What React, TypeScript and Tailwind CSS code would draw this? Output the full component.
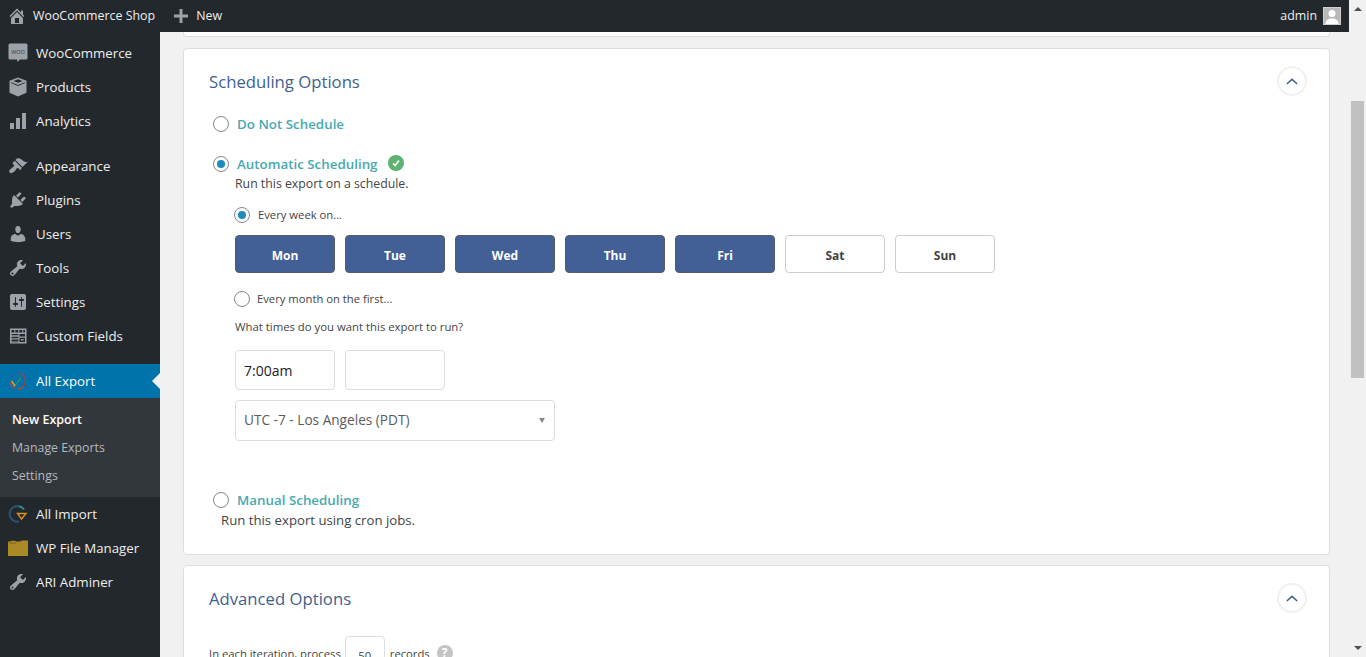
import React from "react";

const font = { fontFamily: '"Open Sans", sans-serif' };

function Dash({ d, className = "" }: { d: string; className?: string }) {
  return (
    <svg viewBox="0 0 20 20" className={"w-5 h-5 fill-[#9ca2a7] " + className}>
      <path d={d} />
    </svg>
  );
}

const P = {
  home: "M16 8.5l1.53 1.53-1.06 1.06L10 4.62l-6.47 6.47-1.06-1.06L10 2.5l4 4v-2h2v4zm-6-2.46l6 5.99V18H4v-5.97zM12 17v-5H8v5h4z",
  plus: "M17 8.5v3h-5.5V17h-3v-5.5H3v-3h5.5V3h3v5.5H17z",
  box: "M10 .5l8.500 3.300V15.700L10 19.500 1.500 15.700V3.800L10 .5zm0 1.700L5.500 4 10 5.800 14.500 4 10 2.200zM3 5.200v.9l7 3 7-3v-.9l-7 2.900-7-2.900z",
  bars: "M18 18V2h-4v16h4zm-6 0V7H8v11h4zm-6 0v-6H2v6h4z",
  brush: "M14.48 11.06L7.41 3.99l1.5-1.5c.5-.56 2.3-.47 3.51.32 1.21.8 1.43 1.28 2.91 2.1 1.18.64 2.45 1.26 4.45.85zm-.71.71L6.7 4.7 4.93 6.47c-.39.39-.39 1.02 0 1.41l1.06 1.06c.39.39.39 1.03 0 1.42-.6.6-1.43 1.11-2.21 1.69-.35.26-.7.53-1.01.84C1.43 13.23.78 15.57 1.7 16.5l.15.15c.93.92 3.27.27 4.61-1.07.31-.31.58-.66.84-1.01.58-.78 1.09-1.61 1.69-2.21.39-.39 1.03-.39 1.42 0l1.06 1.06c.39.39 1.02.39 1.41 0z",
  plugin: "M13.11 4.36L9.87 7.6 8 5.73l3.24-3.24c.35-.34 1.05-.2 1.56.32.52.51.66 1.21.31 1.55zm-8 1.77l.91-1.12 9.01 9.01-1.19.84c-.71.71-2.63 1.16-3.82 1.16H6.14L4.9 17.26c-.59.59-1.54.59-2.12 0-.59-.58-.59-1.53 0-2.12l1.24-1.24v-3.88c0-1.13.4-3.19 1.09-3.89zm7.26 3.97l3.24-3.24c.34-.35 1.04-.21 1.55.31.52.51.66 1.21.31 1.55l-3.24 3.25z",
  users: "M10 9.25c-2.27 0-2.73-3.44-2.73-3.44C7 4.02 7.82 2 9.97 2c2.16 0 2.98 2.02 2.71 3.81 0 0-.41 3.44-2.68 3.44zm0 2.57L12.72 10c2.39 0 4.52 2.33 4.52 4.53v2.49s-3.65 1.13-7.24 1.13c-3.65 0-7.24-1.13-7.24-1.13v-2.49c0-2.25 1.94-4.48 4.47-4.48z",
  tools: "M16.68 9.77c-1.34 1.34-3.3 1.67-4.95.99l-5.41 6.52c-.99.99-2.59.99-3.58 0s-.99-2.59 0-3.57l6.52-5.42c-.68-1.65-.35-3.61.99-4.95 1.28-1.28 3.12-1.62 4.72-1.06l-2.89 2.89 2.82 2.82 2.86-2.87c.53 1.58.18 3.39-1.08 4.65zM3.81 16.21c.4.39 1.04.39 1.43 0 .4-.4.4-1.04 0-1.43-.39-.4-1.03-.4-1.43 0-.39.39-.39 1.03 0 1.43z",
  settings: "M18 16V4c0-1.1-.9-2-2-2H4c-1.1 0-2 .9-2 2v12c0 1.1.9 2 2 2h12c1.1 0 2-.9 2-2zM8 11h1c.55 0 1 .45 1 1s-.45 1-1 1H8v1.5c0 .28-.22.5-.5.5s-.5-.22-.5-.5V13H6c-.55 0-1-.45-1-1s.45-1 1-1h1V5.5c0-.28.22-.5.5-.5s.5.22.5.5V11zm5-2h-1c-.55 0-1-.45-1-1s.45-1 1-1h1V5.5c0-.28.22-.5.5-.5s.5.22.5.5V7h1c.55 0 1 .45 1 1s-.45 1-1 1h-1v5.5c0 .28-.22.5-.5.5s-.5-.22-.5-.5V9z",
  fields: "M2 2.500h16.500v15H2v-15zM3.500 4v2.500h2.800V4H3.500zm3.800 0v2.500h3V4h-3zm4 0v2.500h3V4h-3zm4 0v2.500h1.700V4h-1.700zM3.500 8v1.300h7V8h-7zm8 0v2.500H17V8h-5.500zM3.500 10.800v1.400h7v-1.400h-7zm0 2.700v1.400h7v-1.400h-7zm8-1.800V16H17v-4.300h-5.500zM3.500 15.500v.7h7v-.7h-7zM13 13h2.500v1.500H13V13z",
};

function WooIcon() {
  return (
    <svg viewBox="0 0 20 20" className="w-5 h-5 fill-[#9ca2a7]">
      <path d="M2 .5h16a1.500 1.500 0 0 1 1.500 1.500v13a1.500 1.500 0 0 1-1.500 1.500h-6l-2.500 2.500L9 16.500H2A1.500 1.500 0 0 1 .5 15V2A1.500 1.500 0 0 1 2 .5z" />
      <text x="10" y="10.500" textAnchor="middle" fontSize="5.500" fill="#32373c" fontFamily="Open Sans, sans-serif">WOO</text>
    </svg>
  );
}

function ExportIcon() {
  return (
    <svg viewBox="0 0 20 20" className="w-5 h-5 fill-none">
      <path d="M11 2a8 8 0 0 1 4 13.500" stroke="#b83a3a" strokeWidth="1.200" />
      <path d="M15.500 15.500a8 8 0 0 1-6 2.500" stroke="#c8413a" strokeWidth="1.400" />
      <path d="M2.500 8a8 8 0 0 1 8.500-6" stroke="#2d5f96" strokeWidth="1.200" />
      <path d="M2 11a8 8 0 0 0 5.500 6.500" stroke="#b8473a" strokeWidth="1.200" />
      <path d="M7 15l6-9" stroke="#3f8f5a" strokeWidth="1.200" />
      <path d="M3.500 10l3.500 5" stroke="#d8a02c" strokeWidth="1.500" />
    </svg>
  );
}

function ImportIcon() {
  return (
    <svg viewBox="0 0 20 20" className="w-5 h-5 fill-none">
      <path d="M16 5.500a7.800 7.800 0 1 0-5 12" stroke="#27506f" strokeWidth="2.200" />
      <path d="M16 5.500a7.800 7.800 0 0 0-5-3" stroke="#2f8a86" strokeWidth="2" />
      <path d="M9.500 9.500h8.500L13.500 15z" stroke="#d98e26" strokeWidth="1.400" />
    </svg>
  );
}

function FolderIcon() {
  return (
    <svg viewBox="0 0 20 16" className="w-5 h-4">
      <path d="M0 1.500h2L3 .8h4l1 .7h4L14 .5h6v15a.5.5 0 0 1-.5.5H.5a.5.5 0 0 1-.5-.5z" fill="#ab8a26" />
      <path d="M1 2.500h7v1.200H1z" fill="#836a1e" />
    </svg>
  );
}

function MenuItem({ icon, label, gap }: { icon: React.ReactNode; label: string; gap?: boolean }) {
  return (
    <div className={"flex items-center h-[34px] text-[13.3px] text-[#eeeeee] " + (gap ? "mt-[11px]" : "")}>
      <span className="w-9 flex items-center pl-2 shrink-0">{icon}</span>
      <span className="pt-[2px]">{label}</span>
    </div>
  );
}

function Sidebar() {
  return (
    <aside className="w-40 shrink-0 bg-[#23282d] pt-1 h-[625px]">
      <MenuItem icon={<WooIcon />} label="WooCommerce" />
      <MenuItem icon={<Dash d={P.box} />} label="Products" />
      <MenuItem icon={<Dash d={P.bars} />} label="Analytics" />
      <MenuItem gap icon={<Dash d={P.brush} />} label="Appearance" />
      <MenuItem icon={<Dash d={P.plugin} />} label="Plugins" />
      <MenuItem icon={<Dash d={P.users} />} label="Users" />
      <MenuItem icon={<Dash d={P.tools} />} label="Tools" />
      <MenuItem icon={<Dash d={P.settings} />} label="Settings" />
      <MenuItem icon={<Dash d={P.fields} />} label="Custom Fields" />
      <div className="relative mt-[11px] flex items-center h-[34px] bg-[#0073aa] text-[13.3px] text-white">
        <span className="w-9 flex items-center pl-2 shrink-0"><ExportIcon /></span>
        <span className="pt-[2px]">All Export</span>
        <span className="absolute right-0 top-[9px] w-0 h-0 border-y-[8px] border-y-transparent border-r-[8px] border-r-[#f1f1f1]" />
      </div>
      <div className="bg-[#32373c] h-[99px] pt-[8px]">
        <div className="h-7 flex items-center pl-3 text-[12.5px] font-semibold text-white">New Export</div>
        <div className="h-7 flex items-center pl-3 text-[12.35px] text-[#b4b9be]">Manage Exports</div>
        <div className="h-7 flex items-center pl-3 text-[12.35px] text-[#b4b9be]">Settings</div>
      </div>
      <MenuItem icon={<ImportIcon />} label="All Import" />
      <MenuItem icon={<FolderIcon />} label="WP File Manager" />
      <MenuItem icon={<Dash d={P.tools} />} label="ARI Adminer" />
    </aside>
  );
}

function TopBar() {
  return (
    <header className="h-8 bg-[#23282d] flex items-center text-[12.4px] text-[#eeeeee] shrink-0">
      <Dash d={P.home} className="ml-[7px]" />
      <span className="ml-[6px]">WooCommerce Shop</span>
      <Dash d={P.plus} className="ml-[16px]" />
      <span className="ml-[5px]">New</span>
      <span className="ml-auto">admin</span>
      <span className="ml-[6px] mr-[8px] w-[18px] h-[18px] bg-[#b9b9b9] border border-[#cfcfcf] overflow-hidden flex items-end justify-center">
        <svg viewBox="0 0 16 16" className="w-4 h-4 fill-white">
          <circle cx="8" cy="5.500" r="3.500" />
          <path d="M1.500 16c0-4 3-5.500 6.500-5.500s6.500 1.500 6.500 5.500z" />
        </svg>
      </span>
    </header>
  );
}

function Radio({ checked }: { checked?: boolean }) {
  return (
    <span className="w-4 h-4 rounded-full border border-[#7e8993] bg-white flex items-center justify-center shrink-0">
      {checked && <span className="w-2 h-2 rounded-full bg-[#1e8cbe]" />}
    </span>
  );
}

function Collapse({ className = "" }: { className?: string }) {
  return (
    <span className={"absolute right-[22px] w-[30px] h-[30px] rounded-full border-2 border-[#f0f0f0] bg-white flex items-center justify-center " + className}>
      <svg viewBox="0 0 14 8" className="w-3 h-[7px] fill-none stroke-[#40618f] stroke-[1.7]">
        <path d="M1 7l6-5.500L13 7" />
      </svg>
    </span>
  );
}

function Day({ label, on }: { label: string; on?: boolean }) {
  return (
    <div
      className={
        "w-[100px] h-[38px] rounded-[4px] flex items-center justify-center pt-[3px] text-[12px] font-bold " +
        (on ? "bg-[#425f96] border border-[#555d66] text-white" : "bg-white border border-[#cccccc] text-[#444444]")
      }
    >
      {label}
    </div>
  );
}

function Heading({ children }: { children: React.ReactNode }) {
  return <h2 className="h-[66px] flex items-center pl-[25px] text-[16.7px] font-medium text-[#40618f]">{children}</h2>;
}

function Label({ children }: { children: React.ReactNode }) {
  return <span className="text-[13.35px] font-semibold text-[#46a9b1] leading-[18px]">{children}</span>;
}

export default function App() {
  return (
    <div className="flex h-[657px] overflow-hidden bg-[#f1f1f1]" style={font}>
      <div className="w-[1349px] shrink-0 flex flex-col">
        <TopBar />
        <div className="flex flex-1 min-h-0">
          <Sidebar />
          <main className="flex-1 min-w-0 pl-[23px] pr-[19px] overflow-hidden">
            <div className="h-[5px] bg-white border border-t-0 border-[#dddddd] rounded-b-[4px]" />
            <section className="relative mt-[11px] bg-white border border-[#dddddd] rounded-[4px] pb-[25px]">
              <Collapse className="top-[17px]" />
              <Heading>Scheduling Options</Heading>
              <div className="pl-[29px] flex items-center gap-2 h-[18px]">
                <Radio />
                <Label>Do Not Schedule</Label>
              </div>
              <div className="pl-[29px] flex items-center gap-2 h-[18px] mt-[22px]">
                <Radio checked />
                <Label>Automatic Scheduling</Label>
                <span className="ml-[2px] -mt-[2px] w-4 h-4 rounded-full bg-[#5cb26e] flex items-center justify-center">
                  <svg viewBox="0 0 12 12" className="w-[10px] h-[10px] fill-none stroke-white stroke-[2]">
                    <path d="M2.500 6.500l2.500 2.500 4.500-6" />
                  </svg>
                </span>
              </div>
              <p className="pl-[51px] mt-[2px] h-[18px] leading-[18px] text-[12.3px] text-[#444444]">Run this export on a schedule.</p>
              <div className="pl-[50px] mt-[13px] h-[18px] flex items-center gap-2 text-[11.25px] text-[#444444]">
                <Radio checked />
                <span>Every week on...</span>
              </div>
              <div className="pl-[51px] mt-[11px] flex gap-[10px]">
                <Day on label="Mon" />
                <Day on label="Tue" />
                <Day on label="Wed" />
                <Day on label="Thu" />
                <Day on label="Fri" />
                <Day label="Sat" />
                <Day label="Sun" />
              </div>
              <div className="pl-[50px] mt-[17px] h-[18px] flex items-center gap-[7px] text-[11.25px] text-[#444444]">
                <Radio />
                <span>Every month on the first...</span>
              </div>
              <p className="pl-[51px] mt-[10px] h-[18px] leading-[18px] text-[11.35px] text-[#444444]">What times do you want this export to run?</p>
              <div className="pl-[51px] mt-[14px] flex gap-[10px]">
                <div className="w-[100px] h-[40px] rounded-[4px] border border-[#dddddd] flex items-center pl-2 text-[14px] text-[#222222]">7:00am</div>
                <div className="w-[100px] h-[40px] rounded-[4px] border border-[#dddddd]" />
              </div>
              <div className="ml-[51px] mt-[10px] w-[320px] h-[41px] rounded-[4px] border border-[#dddddd] flex items-center pl-2 pr-[9px] text-[13.65px] text-[#5c5c5c]">
                <span>UTC -7 - Los Angeles (PDT)</span>
                <span className="ml-auto w-0 h-0 border-x-[3.5px] border-x-transparent border-t-[5px] border-t-[#888888]" />
              </div>
              <div className="pl-[29px] flex items-center gap-2 h-[18px] mt-[50px]">
                <Radio />
                <Label>Manual Scheduling</Label>
              </div>
              <p className="pl-[37px] mt-[2px] h-[18px] leading-[18px] text-[13.2px] text-[#444444]">Run this export using cron jobs.</p>
            </section>
            <section className="relative mt-[10px] bg-white border border-[#dddddd] rounded-[4px] pb-6">
              <Collapse className="top-[17px]" />
              <Heading>Advanced Options</Heading>
              <div className="pl-[25px] mt-1 flex items-start text-[11.25px] text-[#444444]">
                <span className="mt-[10px]">In each iteration, process</span>
                <span className="ml-[4px] w-10 h-10 rounded-[4px] border border-[#dddddd] flex items-center justify-center">50</span>
                <span className="ml-[5px] mt-[10px]">records</span>
                <span className="ml-[7px] mt-[9px] w-4 h-4 rounded-full bg-[#c4c4c4] text-white text-[12px] font-bold flex items-center justify-center">?</span>
              </div>
            </section>
          </main>
        </div>
      </div>
      <div className="w-[17px] h-[657px] shrink-0 bg-[#f1f1f1] flex flex-col items-center">
        <span className="mt-[7px] w-0 h-0 border-x-[4px] border-x-transparent border-b-[4px] border-b-[#505050]" />
        <span className="mt-[90px] w-[13px] h-[277px] bg-[#c1c1c1]" />
        <span className="mt-auto mb-[7px] w-0 h-0 border-x-[4px] border-x-transparent border-t-[4px] border-t-[#505050]" />
      </div>
    </div>
  );
}
